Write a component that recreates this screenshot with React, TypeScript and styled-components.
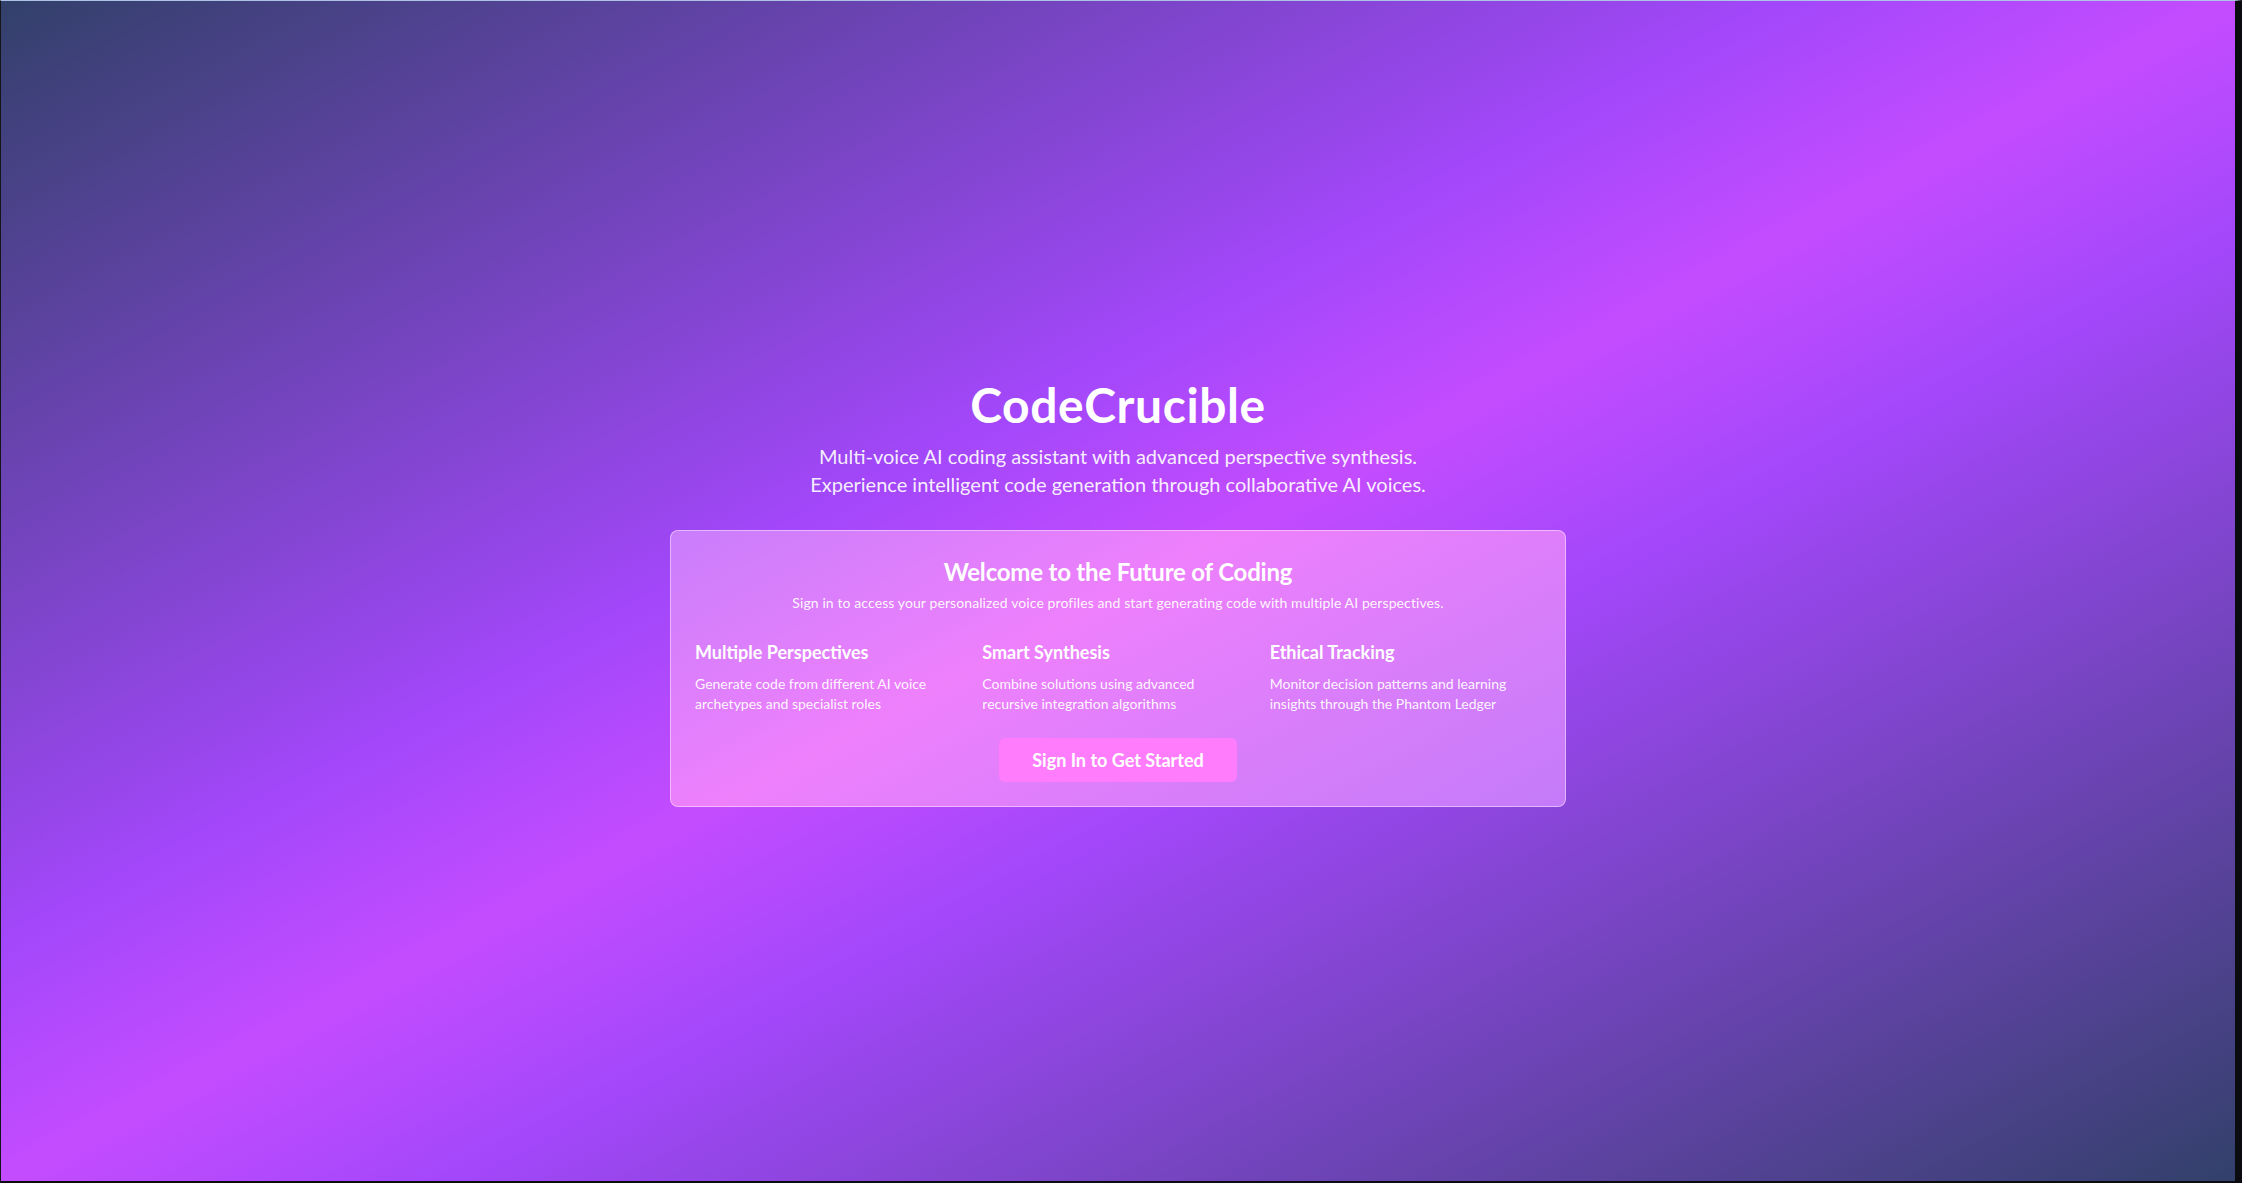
import React from "react";
import styled, { createGlobalStyle } from "styled-components";

const GlobalStyle = createGlobalStyle`
  html, body {
    margin: 0;
    padding: 0;
    height: 100%;
    background: #0b0c10;
  }
  body {
    font-family: Lato, "Noto Sans", "Liberation Sans", sans-serif;
    -webkit-font-smoothing: antialiased;
  }
  #root { height: 100%; }
  *, *::before, *::after { box-sizing: border-box; }
`;

const Frame = styled.div`
  height: 100vh;
  display: flex;
  border-top: 1px solid #aec2e6;
  border-left: 1px solid #15161a;
  border-right: 7px solid #0b0c10;
  border-bottom: 2px solid #0b0c10;
`;

const Page = styled.main`
  flex: 1;
  display: flex;
  align-items: center;
  justify-content: center;
  padding: 22px 16px 16px;
  background: linear-gradient(
    to bottom right,
    #32406a 0%,
    #a347fa 40%,
    #c44cff 50%,
    #a347fa 60%,
    #32406a 100%
  );
`;

const Column = styled.div`
  width: 896px;
  display: flex;
  flex-direction: column;
  align-items: center;
  color: #ffffff;
`;

const Title = styled.h1`
  margin: 0 0 13px;
  font-size: 48px;
  line-height: 48px;
  font-weight: 700;
  letter-spacing: 0.6px;
  color: #ffffff;
  text-align: center;
`;

const Subtitle = styled.p`
  margin: 0 0 32px;
  font-size: 20px;
  line-height: 28px;
  font-weight: 400;
  color: rgba(255, 255, 255, 0.92);
  text-align: center;
`;

const Card = styled.section`
  width: 896px;
  padding: 25px 24px 24px;
  border: 1px solid rgba(255, 240, 255, 0.5);
  border-radius: 8px;
  background: linear-gradient(
      to bottom right,
      #8a60f0 0%,
      #c87dfb 37%,
      #ee80fc 50%,
      #c47bf9 69%,
      #8a60f0 100%
    )
    fixed;
  display: flex;
  flex-direction: column;
  align-items: center;
`;

const CardTitle = styled.h2`
  margin: 0;
  font-size: 24px;
  line-height: 32px;
  font-weight: 700;
  letter-spacing: -0.2px;
  text-align: center;
`;

const CardText = styled.p`
  margin: 5px 0 25px;
  font-size: 14px;
  line-height: 20px;
  font-weight: 400;
  color: rgba(255, 255, 255, 0.95);
  letter-spacing: 0.1px;
  text-align: center;
`;

const Features = styled.div`
  width: 100%;
  display: grid;
  grid-template-columns: repeat(3, 1fr);
  gap: 16px;
  margin-bottom: 24px;
`;

const Feature = styled.div`
  display: flex;
  flex-direction: column;
  gap: 8px;
`;

const FeatureTitle = styled.h3`
  margin: 0;
  font-size: 18px;
  line-height: 28px;
  font-weight: 700;
`;

const FeatureText = styled.p`
  margin: 0;
  font-size: 14px;
  line-height: 20px;
  color: rgba(255, 255, 255, 0.95);
  max-width: 240px;
`;

const Button = styled.button`
  height: 44px;
  padding: 0 33px;
  border: none;
  border-radius: 6px;
  background: #ff7dfc;
  color: #ffffff;
  font-family: inherit;
  font-size: 18px;
  font-weight: 700;
  cursor: pointer;
`;

const features = [
  {
    title: "Multiple Perspectives",
    text: "Generate code from different AI voice archetypes and specialist roles",
  },
  {
    title: "Smart Synthesis",
    text: "Combine solutions using advanced recursive integration algorithms",
  },
  {
    title: "Ethical Tracking",
    text: "Monitor decision patterns and learning insights through the Phantom Ledger",
  },
];

export default function App() {
  return (
    <>
      <GlobalStyle />
      <Frame>
        <Page>
          <Column>
            <Title>CodeCrucible</Title>
            <Subtitle>
              Multi-voice AI coding assistant with advanced perspective synthesis.
              <br />
              Experience intelligent code generation through collaborative AI voices.
            </Subtitle>
            <Card>
              <CardTitle>Welcome to the Future of Coding</CardTitle>
              <CardText>
                Sign in to access your personalized voice profiles and start generating code
                with multiple AI perspectives.
              </CardText>
              <Features>
                {features.map((f) => (
                  <Feature key={f.title}>
                    <FeatureTitle>{f.title}</FeatureTitle>
                    <FeatureText>{f.text}</FeatureText>
                  </Feature>
                ))}
              </Features>
              <Button>Sign In to Get Started</Button>
            </Card>
          </Column>
        </Page>
      </Frame>
    </>
  );
}
